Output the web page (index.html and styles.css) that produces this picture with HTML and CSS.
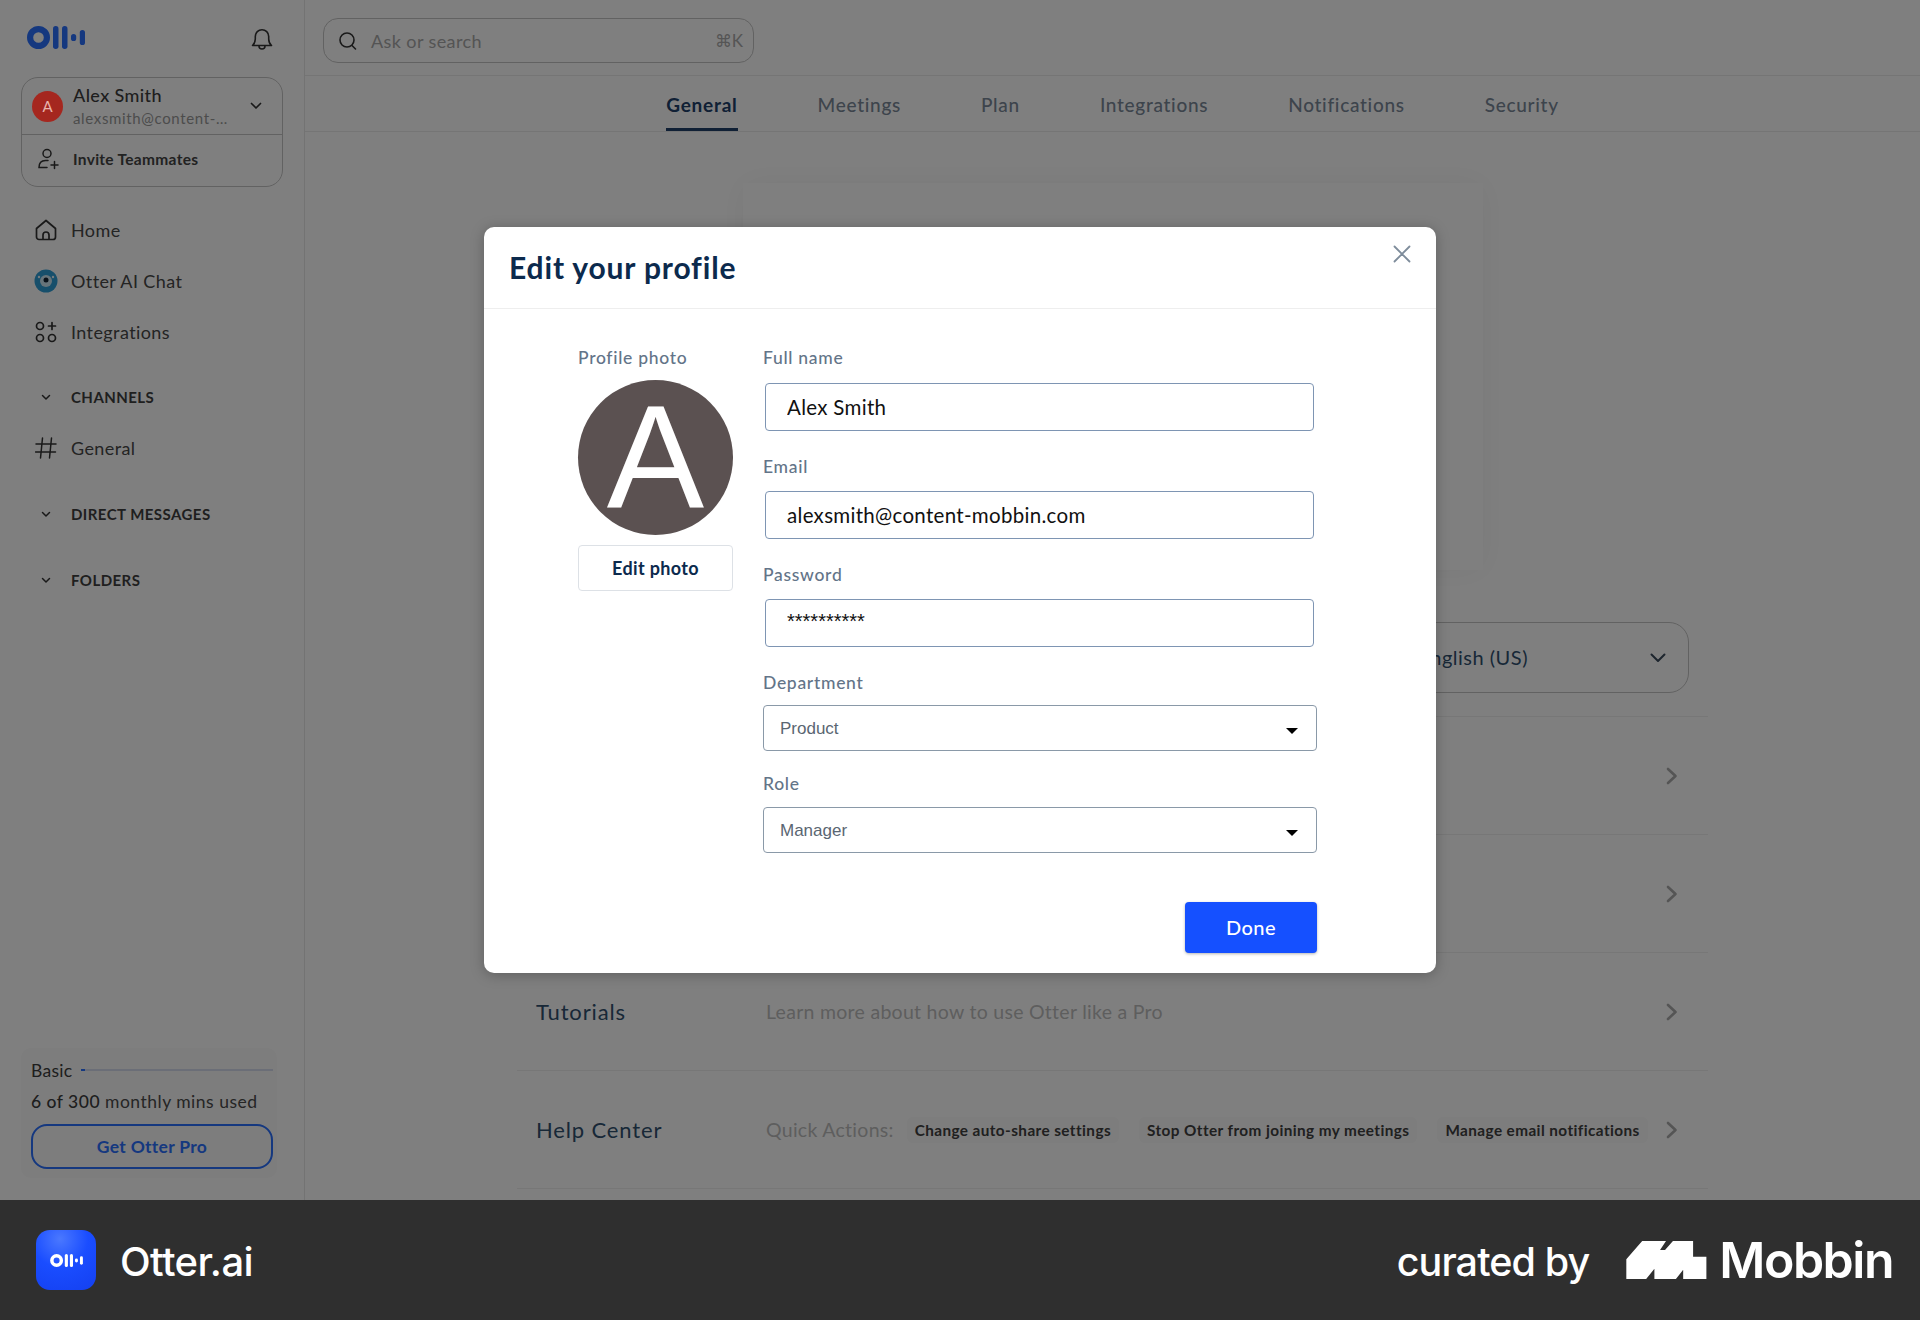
FILE: index.html
```html
<!DOCTYPE html>
<html lang="en">
<head>
<meta charset="utf-8">
<title>Otter.ai – Edit your profile</title>
<link rel="stylesheet" href="styles.css">
</head>
<body>
<div class="app">
  <aside class="sidebar">
    <div class="brand-row">
      <svg class="logo" viewBox="0 0 58 23" fill="#2a70ff"><path fill-rule="evenodd" d="M11.5 0a11.5 11.5 0 1 1 0 23 11.5 11.5 0 0 1 0-23Zm0 6.2a5.3 5.3 0 1 0 0 10.6 5.3 5.3 0 0 0 0-10.6Z"/><rect x="26" y="0" width="5.5" height="23" rx="2.7"/><rect x="35" y="0" width="5.5" height="23" rx="2.7"/><rect x="44" y="8" width="5.2" height="7" rx="2.6"/><rect x="52.8" y="4" width="5.2" height="15" rx="2.6"/></svg>
      <svg class="bell" viewBox="0 0 22 22" fill="none" stroke="#333" stroke-width="1.6" stroke-linejoin="round"><path d="M1.5 17.500c1.800-1.600 2.800-3 2.800-6.500V8.400a6.700 6.700 0 0 1 13.400 0V11c0 3.500 1 4.900 2.800 6.500Z"/><path d="M8 18a3 3 0 0 0 6 0"/></svg>
    </div>
    <div class="user-card">
      <div class="user-top">
        <span class="avatar-sm">A</span>
        <div class="user-text">
          <div class="user-name">Alex Smith</div>
          <div class="user-mail">alexsmith@content-…</div>
        </div>
        <svg class="chev-sm" viewBox="0 0 12 8" fill="none" stroke="#333" stroke-width="1.700" stroke-linecap="round" stroke-linejoin="round"><path d="M1.500 1.500 6 6l4.500-4.500"/></svg>
      </div>
      <div class="user-invite">
        <svg class="ico-invite" viewBox="0 0 22 22" fill="none" stroke="#333" stroke-width="1.500" stroke-linecap="round"><circle cx="10" cy="5.500" r="4"/><path d="M11 12.500H8.500C4.500 12.500 2 15 2 19.500h8"/><path d="M14 17h7M17.500 13.500v7"/></svg>
        <span>Invite Teammates</span>
      </div>
    </div>
    <nav class="nav">
      <a class="nav-item"><svg class="ico" viewBox="0 0 22 22" fill="none" stroke="#333" stroke-width="1.700" stroke-linejoin="round"><path d="M1.500 9.500 11 1.500l9.500 8V18a2.500 2.500 0 0 1-2.500 2.500H4A2.500 2.500 0 0 1 1.500 18Z"/><path d="M8 20.500v-4.500a3 3 0 0 1 6 0v4.500"/></svg><span>Home</span></a>
      <a class="nav-item"><svg class="ico ico-chat" viewBox="0 0 24 24"><circle cx="12" cy="12" r="11.500" fill="#2f9ed6"/><path d="M.5 12a11.500 11.500 0 0 1 23 0 6 6 0 0 0-23 0Z" fill="#1a4fd0"/><circle cx="12" cy="12" r="6" fill="#cfe9f5"/><circle cx="12" cy="11" r="2.500" fill="#123"/><circle cx="5" cy="8" r="1.200" fill="#eaf6fb"/><circle cx="19" cy="8" r="1.200" fill="#eaf6fb"/></svg><span>Otter AI Chat</span></a>
      <a class="nav-item"><svg class="ico" viewBox="0 0 22 22" fill="none" stroke="#333" stroke-width="1.700" stroke-linecap="round"><circle cx="5" cy="5" r="3.500"/><circle cx="5" cy="17" r="3.500"/><circle cx="17" cy="17" r="3.500"/><path d="M17 1.500v7M13.500 5h7"/></svg><span>Integrations</span></a>
    </nav>
    <div class="section section-first"><svg class="chev-xs" viewBox="0 0 10 7" fill="none" stroke="#333" stroke-width="1.500" stroke-linecap="round" stroke-linejoin="round"><path d="M1.500 1.500 5 5l3.500-3.500"/></svg><span>CHANNELS</span></div>
    <a class="nav-item nav-channel"><svg class="ico" viewBox="0 0 22 22" fill="none" stroke="#333" stroke-width="1.500" stroke-linecap="round"><path d="M7.500 1 5.500 21M16.500 1l-2 20M1 7h20M0.500 15h20"/></svg><span>General</span></a>
    <div class="section section-dm"><svg class="chev-xs" viewBox="0 0 10 7" fill="none" stroke="#333" stroke-width="1.500" stroke-linecap="round" stroke-linejoin="round"><path d="M1.500 1.500 5 5l3.500-3.500"/></svg><span>DIRECT MESSAGES</span></div>
    <div class="section section-folders"><svg class="chev-xs" viewBox="0 0 10 7" fill="none" stroke="#333" stroke-width="1.500" stroke-linecap="round" stroke-linejoin="round"><path d="M1.500 1.500 5 5l3.500-3.500"/></svg><span>FOLDERS</span></div>
    <div class="plan">
      <div class="plan-head"><span>Basic</span><div class="plan-bar"><div class="plan-fill"></div></div></div>
      <div class="plan-usage"><b>6 of 300</b> monthly mins used</div>
      <button class="plan-btn">Get Otter Pro</button>
    </div>
  </aside>

  <main class="main">
    <header class="topbar">
      <div class="search">
        <svg class="search-ico" viewBox="0 0 20 20" fill="none" stroke="#333" stroke-width="1.600" stroke-linecap="round"><circle cx="9" cy="9" r="7"/><path d="m14 14.500 3.500 3.500"/></svg>
        <span class="search-text">Ask or search</span>
        <span class="search-key">⌘K</span>
      </div>
    </header>
    <div class="tabs">
      <a class="tab tab-active">General</a><a class="tab">Meetings</a><a class="tab">Plan</a><a class="tab">Integrations</a><a class="tab">Notifications</a><a class="tab">Security</a>
    </div>
    <div class="content">
      <div class="profile-card"></div>
      <div class="rows">
        <div class="row">
          <div class="row-label"></div>
          <div class="lang-select"><span>English (US)</span>
            <svg class="chev-lang" viewBox="0 0 16 10" fill="none" stroke="#3a4a5c" stroke-width="2" stroke-linecap="round" stroke-linejoin="round"><path d="m1.500 1.500 6.500 6.500 6.500-6.500"/></svg>
          </div>
        </div>
        <div class="row"><div class="row-label"></div><div class="row-value"></div><svg class="chev-row" viewBox="0 0 12 18" fill="none" stroke="#aaa" stroke-width="2.600" stroke-linecap="round" stroke-linejoin="round"><path d="m2 2 7.500 7L2 16"/></svg></div>
        <div class="row"><div class="row-label"></div><div class="row-value"></div><svg class="chev-row" viewBox="0 0 12 18" fill="none" stroke="#aaa" stroke-width="2.600" stroke-linecap="round" stroke-linejoin="round"><path d="m2 2 7.500 7L2 16"/></svg></div>
        <div class="row"><div class="row-label">Tutorials</div><div class="row-value">Learn more about how to use Otter like a Pro</div><svg class="chev-row" viewBox="0 0 12 18" fill="none" stroke="#aaa" stroke-width="2.600" stroke-linecap="round" stroke-linejoin="round"><path d="m2 2 7.500 7L2 16"/></svg></div>
        <div class="row"><div class="row-label">Help Center</div>
          <div class="row-value row-chips"><span class="quick">Quick Actions:</span><span class="chip">Change auto-share settings</span><span class="chip">Stop Otter from joining my meetings</span><span class="chip">Manage email notifications</span></div>
          <svg class="chev-row" viewBox="0 0 12 18" fill="none" stroke="#aaa" stroke-width="2.600" stroke-linecap="round" stroke-linejoin="round"><path d="m2 2 7.500 7L2 16"/></svg></div>
      </div>
    </div>
  </main>

  <div class="overlay">
    <section class="modal">
      <div class="modal-head">
        <h1 class="modal-title">Edit your profile</h1>
        <svg class="modal-close" viewBox="0 0 18 18" fill="none" stroke="#7e8c9b" stroke-width="1.800" stroke-linecap="round"><path d="m1.500 1.500 15 15M16.500 1.500l-15 15"/></svg>
      </div>
      <div class="modal-body">
        <div class="photo-col">
          <div class="field-label">Profile photo</div>
          <div class="avatar-lg">A</div>
          <button class="photo-btn">Edit photo</button>
        </div>
        <div class="form-col">
          <label class="field-label">Full name</label>
          <input class="input" type="text" value="Alex Smith">
          <label class="field-label field-gap">Email</label>
          <input class="input" type="text" value="alexsmith@content-mobbin.com">
          <label class="field-label field-gap">Password</label>
          <input class="input input-pass" type="text" value="**********">
          <label class="field-label field-gap field-sel">Department</label>
          <div class="select-wrap"><select class="select"><option>Product</option></select></div>
          <label class="field-label field-role field-sel">Role</label>
          <div class="select-wrap"><select class="select"><option>Manager</option></select></div>
          <div class="form-actions"><button class="done">Done</button></div>
        </div>
      </div>
    </section>
  </div>
</div>

<footer class="credit">
  <div class="credit-left">
    <div class="credit-icon">
      <svg viewBox="0 0 58 23" fill="#fff"><path fill-rule="evenodd" d="M11.500 0a11.500 11.500 0 1 1 0 23 11.500 11.500 0 0 1 0-23Zm0 6.200a5.300 5.300 0 1 0 0 10.600 5.300 5.300 0 0 0 0-10.600Z"/><rect x="26" y="0" width="5.500" height="23" rx="2.700"/><rect x="35" y="0" width="5.500" height="23" rx="2.700"/><rect x="44" y="8" width="5.200" height="7" rx="2.600"/><rect x="52.800" y="4" width="5.200" height="15" rx="2.600"/></svg>
    </div>
    <span class="credit-name">Otter.ai</span>
  </div>
  <div class="credit-right">
    <span class="curated">curated by</span>
    <svg class="mobbin-mark" viewBox="0 0 81 38.300" fill="#fff"><path d="M0 38.300V18.300L16 0h24l-6 9h5l8-9h20.300v16h13.400v22.300H57.300V29L50 38.300H28.300V28L20 38.300Z"/></svg>
    <span class="mobbin">Mobbin</span>
  </div>
</footer>
</body>
</html>
```

FILE: styles.css
```css
* { box-sizing: border-box; }
html, body { margin: 0; padding: 0; }
body { width: 1920px; height: 1320px; overflow: hidden; font-family: "Lato", "Noto Sans", sans-serif; background: #2f2f2f; }

.app { position: relative; display: flex; height: 1200px; background: #fff; color: #444; overflow: hidden; }

/* sidebar */
.sidebar { flex: 0 0 305px; height: 100%; border-right: 1px solid #e6e6e6; display: flex; flex-direction: column; padding: 26px 21px 22px; }
.brand-row { display: flex; justify-content: space-between; align-items: center; padding: 0 10px 0 6px; height: 23px; }
.logo { width: 58px; height: 23px; }
.bell { width: 22px; height: 22px; margin-top: 3px; }

.user-card { margin-top: 28px; width: 262px; height: 110px; border: 1px solid #c4c4c4; border-radius: 17px; display: flex; flex-direction: column; }
.user-top { height: 57px; display: flex; align-items: center; padding-left: 10px; padding-right: 20px; border-bottom: 1px solid #c4c4c4; }
.avatar-sm { position: relative; z-index: 2; flex: 0 0 31px; height: 31px; border-radius: 50%; background: #a5271f; color: #e8b4ac; font-size: 15px; display: flex; align-items: center; justify-content: center; margin-right: 10px; }
.user-text { flex: 1; margin-top: -1px; }
.user-name { font-size: 18px; line-height: 22px; font-weight: 500; color: #3c3c3c; letter-spacing: .4px; }
.user-mail { font-size: 15px; line-height: 20px; color: #999; letter-spacing: .65px; margin-top: 2px; }
.chev-sm { width: 12px; height: 8px; }
.user-invite { flex: 1; display: flex; align-items: center; padding-left: 15px; padding-bottom: 3px; font-size: 15.500px; font-weight: 700; color: #444; letter-spacing: .3px; }
.ico-invite { width: 22px; height: 22px; margin-right: 14px; }

.nav { margin-top: 32px; display: flex; flex-direction: column; gap: 29px; }
.nav-item { display: flex; align-items: center; height: 22px; font-size: 18px; color: #484848; letter-spacing: .4px; padding-left: 14px; }
.nav-item .ico { width: 22px; height: 22px; margin-right: 14px; flex: none; }
.nav-item .ico-chat { width: 24px; height: 24px; margin-left: -1px; margin-right: 13px; }

.section { display: flex; align-items: center; height: 20px; font-size: 15px; font-weight: 700; color: #3e3e3e; letter-spacing: .45px; padding-left: 20px; }
.chev-xs { width: 10px; height: 7px; margin-right: 20px; }
.section-first { margin-top: 44px; }
.nav-channel { margin-top: 30px; }
.section-dm { margin-top: 45px; }
.section-folders { margin-top: 46px; }

.plan { margin-top: auto; height: 130px; width: 256px; padding: 11px 4px 8px 10px; background: #fafafa; border-radius: 10px; display: flex; flex-direction: column; }
.plan-head { display: flex; align-items: center; font-size: 17.500px; height: 22px; color: #3c3c3c; letter-spacing: .3px; }
.plan-bar { flex: 1; height: 2px; background: #d6dcef; margin-left: 8px; margin-right: 0; }
.plan-fill { width: 4px; height: 100%; background: #2a70ff; }
.plan-usage { margin-top: 10px; font-size: 17.500px; line-height: 22px; color: #4a4a4a; letter-spacing: .5px; white-space: nowrap; }
.plan-usage b { font-weight: 500; color: #3c3c3c; }
.plan-btn { margin-top: 11px; height: 45px; width: 242px; background: transparent; border: 2.500px solid #2a70ff; border-radius: 16px; color: #2a70ff; font: 700 17.500px "Lato", sans-serif; letter-spacing: .3px; }

/* main */
.main { flex: 1; height: 100%; display: flex; flex-direction: column; min-width: 0; }
.topbar { height: 76px; flex: none; border-bottom: 1px solid #eaeaea; padding: 18px 0 0 18px; }
.search { width: 431px; height: 45px; border: 1px solid #c4c4c4; border-radius: 15px; display: flex; align-items: center; padding: 0 10px 0 14px; }
.search-ico { width: 20px; height: 20px; margin-right: 13px; }
.search-text { flex: 1; font-size: 18px; color: #a8a8a8; letter-spacing: .4px; }
.search-key { font-size: 17px; color: #aaa; }

.tabs { height: 56px; flex: none; border-bottom: 1px solid #eaeaea; display: flex; justify-content: center; gap: 80px; }
.tab { height: 55px; display: flex; align-items: center; padding-top: 2px; font-size: 19px; color: #7a8898; letter-spacing: .7px; font-weight: 500; }
.tab-active { color: #21406a; font-weight: 700; border-bottom: 3px solid #21406a; padding-top: 5px; letter-spacing: .75px; }

.content { padding-top: 51px; display: flex; flex-direction: column; align-items: center; }
.profile-card { width: 740px; height: 387px; background: #fff; box-shadow: 0 0 30px rgba(0,0,0,.05); margin-bottom: 29px; }
.rows { width: 1191px; }
.row { height: 118px; border-bottom: 1px solid #eee; display: flex; align-items: center; padding: 0 30px 0 19px; }
.row-label { flex: 0 0 230px; font-size: 22px; color: #30506f; letter-spacing: .85px; white-space: nowrap; }
.row-value { flex: 1; font-size: 19.500px; color: #bdbdbd; letter-spacing: .28px; }
.row-chips { display: flex; align-items: center; white-space: nowrap; }
.quick { margin-right: 13px; }
.chip { height: 26px; padding: 0 8px; margin-right: 20px; background: #fafafa; border-radius: 6px; display: flex; align-items: center; font-size: 15.300px; font-weight: 700; color: #404040; letter-spacing: .42px; }
.chip:last-child { margin-right: 0; }
.chev-row { width: 12px; height: 18px; flex: none; }
.lang-select { flex: 1; height: 71px; margin-right: -11px; border: 1px solid #c4c4c4; border-radius: 20px; display: flex; align-items: center; justify-content: flex-end; padding-right: 22px; padding-bottom: 2px; font-size: 20px; color: #30506f; letter-spacing: .5px; }
.lang-select span { margin-right: 122px; }
.chev-lang { width: 16px; height: 10px; margin-top: 2px; }

/* modal */
.overlay { position: absolute; inset: 0; background: rgba(0,0,0,.5); display: flex; align-items: center; justify-content: center; }
.modal { width: 952px; height: 746px; background: #fff; border-radius: 10px; box-shadow: 0 2px 14px rgba(0,0,0,.25); display: flex; flex-direction: column; }
.modal-head { position: relative; height: 82px; flex: none; border-bottom: 1px solid #eee; padding: 20px 0 0 25px; }
.modal-title { margin: 0; font-size: 30px; line-height: 40px; font-weight: 700; color: #0c2a4d; letter-spacing: .85px; }
.modal-close { position: absolute; top: 18px; right: 25px; width: 18px; height: 18px; }
.modal-body { display: flex; padding: 38px 0 0 94px; flex: 1; }
.photo-col { flex: 0 0 155px; margin-right: 30px; }
.field-label { display: block; height: 22px; line-height: 22px; font-size: 17.500px; font-weight: 500; color: #637488; letter-spacing: .7px; margin-bottom: 14px; white-space: nowrap; }
.field-gap { margin-top: 24px; line-height: 24px; }
.field-role { margin-top: 22px; }
.field-sel { margin-bottom: 12px; }
.avatar-lg { width: 155px; height: 155px; margin-top: -3px; border-radius: 50%; background: #5b5151; color: #fff; font: 400 146px/155px "Liberation Sans", sans-serif; text-align: center; }
.photo-btn { display: block; margin-top: 10px; width: 155px; height: 46px; background: #fff; border: 1px solid #dde1e6; border-radius: 4px; color: #0c2a4d; font: 700 18px "Lato", sans-serif; letter-spacing: .35px; }
.form-col { width: 554px; }
.input { display: block; width: 549px; height: 48px; margin: 0 0 0 2px; padding: 0 21px; border: 1px solid #7e95b3; border-radius: 4px; background: #fff; color: #111; font: 400 20.500px "Lato", sans-serif; letter-spacing: .3px; outline: none; }
.input-pass { font-size: 20px; font-family: "Liberation Sans", sans-serif; letter-spacing: 0; padding-bottom: 4px; }
.select-wrap { position: relative; height: 46px; }
.select-wrap::after { content: ""; position: absolute; right: 19px; top: 23px; border-left: 6.500px solid transparent; border-right: 6.500px solid transparent; border-top: 6.500px solid #000; pointer-events: none; }
.select { display: block; width: 100%; height: 46px; padding: 0 16px; -webkit-appearance: none; appearance: none; background: #fff; border: 1px solid #8a99a8; border-radius: 4px; color: #5a6672; font: 400 17px "Liberation Sans", sans-serif; outline: none; }
.form-actions { display: flex; justify-content: flex-end; margin-top: 49px; }
.done { width: 132px; height: 51px; padding-bottom: 3px; background: #1550ff; color: #fff; border: 0; border-radius: 4px; box-shadow: 0 1px 3px rgba(0,0,0,.3); font: 500 20px "Lato", sans-serif; letter-spacing: .5px; }

/* credit bar */
.credit { height: 120px; background: #2f2f2f; color: #fff; display: flex; justify-content: space-between; align-items: center; padding: 0 27px 0 36px; font-family: "Inter", sans-serif; }
.credit-left { display: flex; align-items: center; }
.credit-icon { width: 60px; height: 60px; border-radius: 14px; background: radial-gradient(circle at 40% 15%, #4a78ff 0%, #1a4dff 45%, #1440f0 100%); display: flex; align-items: center; justify-content: center; margin-right: 24px; }
.credit-icon svg { width: 33px; height: 13px; }
.credit-name { font-size: 40px; font-weight: 500; letter-spacing: -.6px; padding-top: 2px; }
.credit-right { display: flex; align-items: center; }
.curated { font-size: 39.500px; font-weight: 500; letter-spacing: -.9px; margin-right: 37px; padding-top: 4px; }
.mobbin-mark { width: 81px; height: 38px; margin-right: 12px; }
.mobbin { font-size: 50px; font-weight: 600; letter-spacing: -1.500px; line-height: 50px; }
```
